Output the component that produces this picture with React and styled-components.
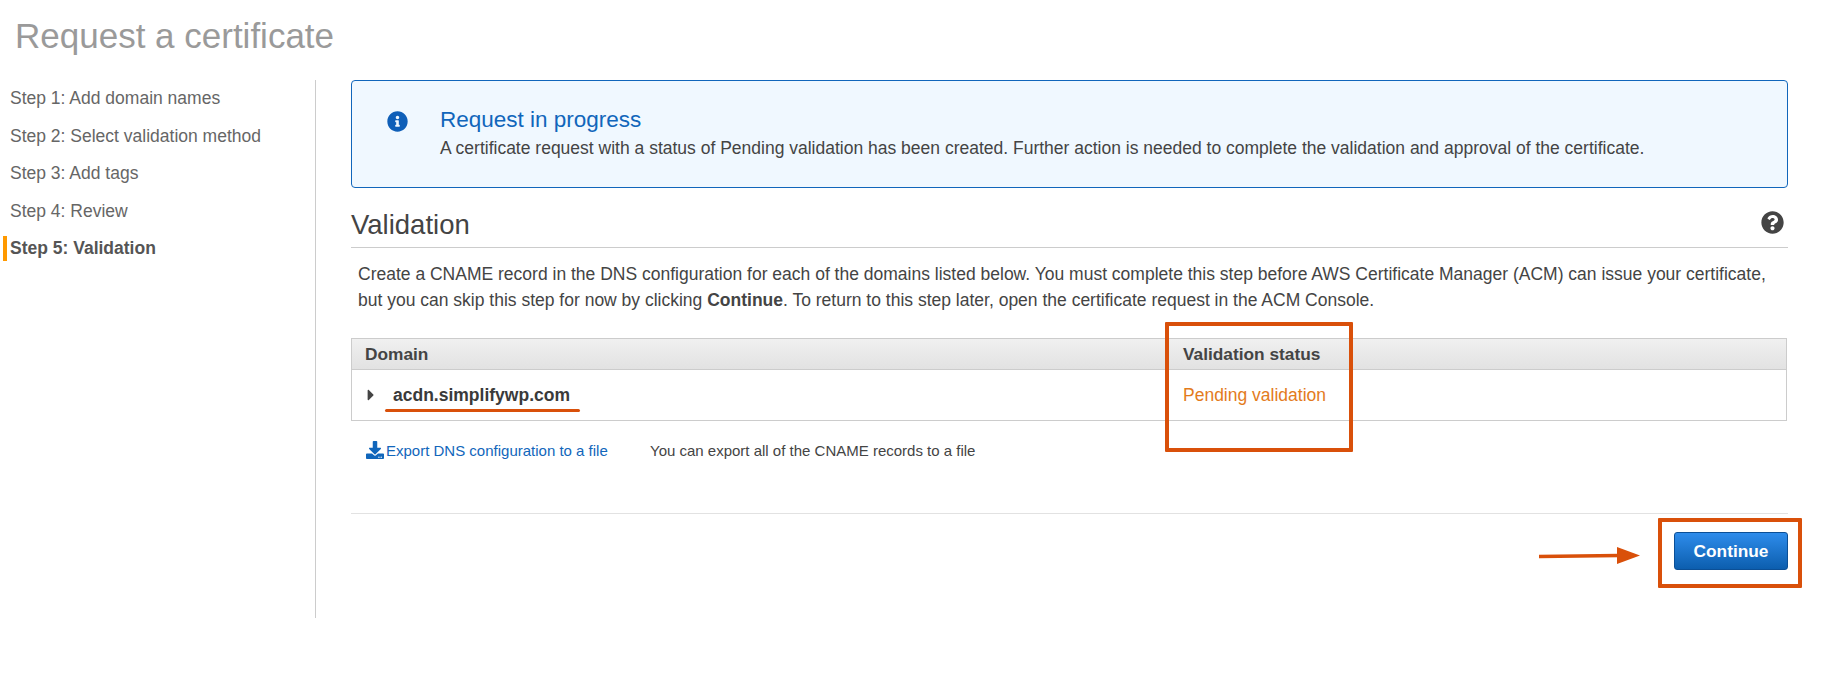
import React from "react";
import styled, { createGlobalStyle } from "styled-components";
import { FaInfoCircle, FaQuestionCircle, FaCaretRight, FaDownload } from "react-icons/fa";

const GlobalStyle = createGlobalStyle`
  html, body {
    margin: 0;
    background: #fff;
    font-family: "Liberation Sans", Arial, sans-serif;
    color: #444;
  }
`;

const Page = styled.div`
  position: relative;
  width: 1823px;
  height: 684px;
  overflow: hidden;
`;

const Title = styled.h1`
  margin: 0;
  padding: 16px 0 0 15px;
  height: 64px;
  box-sizing: border-box;
  font-size: 35px;
  line-height: 40px;
  font-weight: 400;
  color: #9a9a9a;
`;

const Body = styled.div`
  display: flex;
  align-items: flex-start;
`;

const Sidebar = styled.nav`
  flex: none;
  width: 316px;
  height: 538px;
  box-sizing: border-box;
  border-right: 1px solid #ccc;
  margin-top: 16px;
`;

const Step = styled.div`
  height: 37.6px;
  line-height: 37.6px;
  padding-left: 10px;
  font-size: 17.5px;
  color: ${({ $active }) => ($active ? "#555" : "#666")};
  font-weight: ${({ $active }) => ($active ? 700 : 400)};
  position: relative;
  ${({ $active }) =>
    $active &&
    `
    &::before {
      content: "";
      position: absolute;
      left: 3px;
      top: 6px;
      width: 4px;
      height: 25px;
      background: #f90;
    }
  `}
`;

const Main = styled.main`
  flex: none;
  width: 1437px;
  margin: 16px 0 0 35px;
`;

const InfoBox = styled.div`
  box-sizing: border-box;
  height: 108px;
  display: flex;
  border: 1.5px solid #1166bb;
  border-radius: 4px;
  background: #f0f8ff;
  padding: 27px 0 0 35px;
`;

const InfoIcon = styled(FaInfoCircle)`
  width: 21px;
  height: 21px;
  color: #0f5fb8;
  margin-top: 3px;
`;

const InfoText = styled.div`
  margin-left: 32px;
`;

const InfoTitle = styled.div`
  font-size: 22.5px;
  line-height: 24px;
  color: #1166bb;
`;

const InfoDesc = styled.div`
  font-size: 17.5px;
  line-height: 22px;
  margin-top: 5px;
  color: #444;
`;

const SectionHead = styled.div`
  display: flex;
  justify-content: space-between;
  align-items: center;
  height: 60px;
  box-sizing: border-box;
  padding: 14px 4px 0 0;
  border-bottom: 1px solid #ccc;
`;

const SectionTitle = styled.h2`
  margin: 0;
  font-size: 27.5px;
  font-weight: 400;
  color: #444;
`;

const HelpIcon = styled(FaQuestionCircle)`
  width: 23px;
  height: 23px;
  color: #444;
  margin-bottom: 4px;
`;

const Para = styled.p`
  margin: 13px 0 0;
  padding-left: 7px;
  font-size: 17.5px;
  line-height: 26px;
  color: #444;
`;

const Table = styled.div`
  margin: 25px 1px 0 0;
  border: 1px solid #ccc;
`;

const HeadRow = styled.div`
  display: grid;
  grid-template-columns: 818px 1fr;
  height: 30px;
  align-items: center;
  background: linear-gradient(#f0f0f0, #e2e2e2);
  border-bottom: 1px solid #ccc;
  font-size: 17.3px;
  font-weight: 700;
  color: #444;
`;

const HeadCell = styled.div`
  padding-left: 13px;
`;

const DataRow = styled.div`
  display: grid;
  grid-template-columns: 818px 1fr;
  height: 50px;
  align-items: center;
  font-size: 17.5px;
`;

const DomainCell = styled.div`
  display: flex;
  align-items: center;
  padding-left: 10px;
  font-weight: 700;
  font-size: 17.5px;
  color: #3a3a3a;
`;

const Caret = styled(FaCaretRight)`
  width: 18px;
  height: 18px;
  color: #444;
  margin-right: 13px;
`;

const Status = styled.div`
  padding-left: 13px;
  color: #e37b1c;
`;

const ExportRow = styled.div`
  display: flex;
  align-items: center;
  margin-top: 19px;
  padding-left: 15px;
  font-size: 15px;
  height: 20px;
`;

const ExportLink = styled.a`
  display: flex;
  align-items: center;
  gap: 2px;
  color: #1166bb;
  width: 284px;
`;

const ExportIcon = styled(FaDownload)`
  width: 18px;
  height: 18px;
  color: #1166bb;
`;

const Note = styled.span`
  color: #444;
`;

const Footer = styled.div`
  margin-top: 53px;
  border-top: 1px solid #e2e2e2;
  padding-top: 18px;
  display: flex;
  justify-content: flex-end;
`;

const Continue = styled.button`
  width: 114px;
  height: 38px;
  border: 1px solid #0b4f96;
  border-radius: 3px;
  background: linear-gradient(#2e8ceb, #0c5eae);
  color: #fff;
  font: 700 17.3px "Liberation Sans", Arial, sans-serif;
`;

const RedBox = styled.div`
  position: absolute;
  box-sizing: border-box;
  border: 4px solid #d9500a;
  border-radius: 1px;
  left: ${({ $x }) => $x}px;
  top: ${({ $y }) => $y}px;
  width: ${({ $w }) => $w}px;
  height: ${({ $h }) => $h}px;
`;

const Underline = styled.div`
  position: absolute;
  left: 385px;
  top: 408.5px;
  width: 195px;
  height: 3.5px;
  border-radius: 2px;
  background: #d9500a;
`;

const ArrowMark = styled.svg`
  position: absolute;
  left: 1539px;
  top: 545px;
`;

const steps = [
  "Step 1: Add domain names",
  "Step 2: Select validation method",
  "Step 3: Add tags",
  "Step 4: Review",
];

const App = () => (
  <Page>
    <GlobalStyle />
    <Title>Request a certificate</Title>
    <Body>
      <Sidebar>
        {steps.map((s) => (
          <Step key={s}>{s}</Step>
        ))}
        <Step $active>Step 5: Validation</Step>
      </Sidebar>
      <Main>
        <InfoBox>
          <InfoIcon />
          <InfoText>
            <InfoTitle>Request in progress</InfoTitle>
            <InfoDesc>
              A certificate request with a status of Pending validation has been created. Further
              action is needed to complete the validation and approval of the certificate.
            </InfoDesc>
          </InfoText>
        </InfoBox>
        <SectionHead>
          <SectionTitle>Validation</SectionTitle>
          <HelpIcon />
        </SectionHead>
        <Para>
          Create a CNAME record in the DNS configuration for each of the domains listed below. You
          must complete this step before AWS Certificate Manager (ACM) can issue your certificate,
          <br />
          but you can skip this step for now by clicking <b>Continue</b>. To return to this step
          later, open the certificate request in the ACM Console.
        </Para>
        <Table>
          <HeadRow>
            <HeadCell>Domain</HeadCell>
            <HeadCell>Validation status</HeadCell>
          </HeadRow>
          <DataRow>
            <DomainCell>
              <Caret />
              acdn.simplifywp.com
            </DomainCell>
            <Status>Pending validation</Status>
          </DataRow>
        </Table>
        <ExportRow>
          <ExportLink>
            <ExportIcon />
            Export DNS configuration to a file
          </ExportLink>
          <Note>You can export all of the CNAME records to a file</Note>
        </ExportRow>
        <Footer>
          <Continue>Continue</Continue>
        </Footer>
      </Main>
    </Body>
    <Underline />
    <RedBox $x={1165} $y={322} $w={188} $h={130} />
    <RedBox $x={1658} $y={518} $w={144} $h={70} />
    <ArrowMark width="102" height="22" viewBox="0 0 102 22">
      <path d="M0 11.5 L80 10.5" stroke="#d9500a" strokeWidth="3.5" strokeLinecap="round" />
      <path d="M78 2 L101 10.5 L78 19 Z" fill="#d9500a" />
    </ArrowMark>
  </Page>
);

export default App;
